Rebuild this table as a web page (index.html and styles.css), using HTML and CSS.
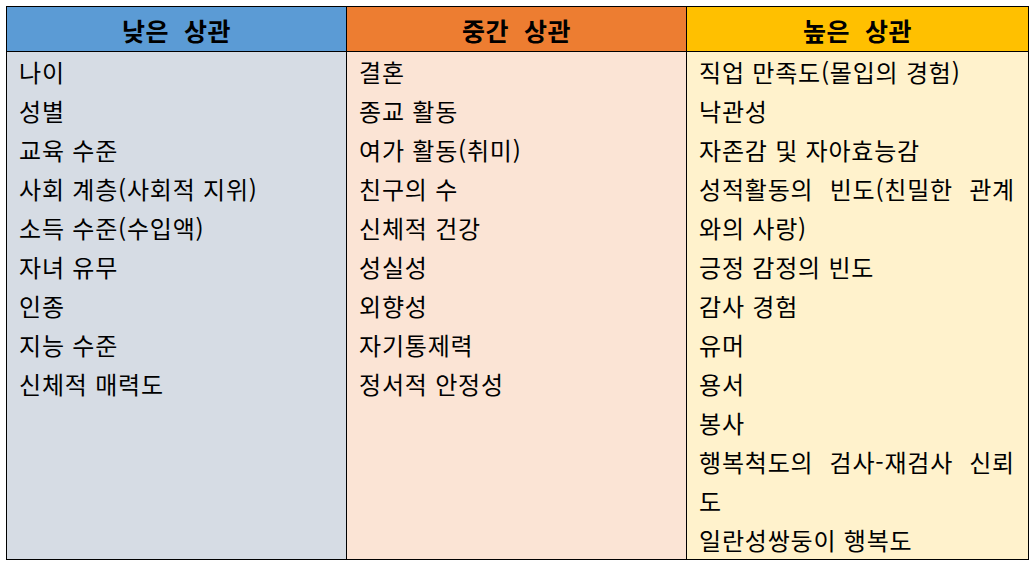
FILE: index.html
```html
<!DOCTYPE html>
<html lang="ko">
<head>
<meta charset="utf-8">
<link rel="stylesheet" href="styles.css">
</head>
<body>
<table class="corr">
  <colgroup>
    <col class="c1"><col class="c2"><col class="c3">
  </colgroup>
  <thead>
    <tr>
      <th class="h-low">낮은&nbsp; 상관</th>
      <th class="h-mid">중간&nbsp; 상관</th>
      <th class="h-high">높은&nbsp; 상관</th>
    </tr>
  </thead>
  <tbody>
    <tr>
      <td class="b-low">
        <p>나이</p>
        <p>성별</p>
        <p>교육 수준</p>
        <p>사회 계층(사회적 지위)</p>
        <p>소득 수준(수입액)</p>
        <p>자녀 유무</p>
        <p>인종</p>
        <p>지능 수준</p>
        <p>신체적 매력도</p>
      </td>
      <td class="b-mid">
        <p>결혼</p>
        <p>종교 활동</p>
        <p>여가 활동(취미)</p>
        <p>친구의 수</p>
        <p>신체적 건강</p>
        <p>성실성</p>
        <p>외향성</p>
        <p>자기통제력</p>
        <p>정서적 안정성</p>
      </td>
      <td class="b-high">
        <p>직업 만족도(몰입의 경험)</p>
        <p>낙관성</p>
        <p>자존감 및 자아효능감</p>
        <p>성적활동의 빈도(친밀한 관계와의 사랑)</p>
        <p>긍정 감정의 빈도</p>
        <p>감사 경험</p>
        <p>유머</p>
        <p>용서</p>
        <p>봉사</p>
        <p>행복척도의 검사-재검사 신뢰도</p>
        <p>일란성쌍둥이 행복도</p>
      </td>
    </tr>
  </tbody>
</table>
</body>
</html>
```

FILE: styles.css
```css
html, body {
  margin: 0;
  background: #ffffff;
}
body {
  padding: 6px 0 0 6px;
  font-family: "Noto Sans CJK KR", "Noto Sans", sans-serif;
  color: #000;
}
.corr {
  border-collapse: collapse;
  table-layout: fixed;
  width: 1022px;
}
.c1 { width: 340px; }
.c2 { width: 340px; }
.c3 { width: 342px; }
.corr th, .corr td {
  border: 1px solid #000;
}
.corr th {
  height: 42px;
  padding: 0;
  font-size: 25px;
  font-weight: 700;
  letter-spacing: 0.5px;
  text-align: center;
  vertical-align: middle;
  line-height: 1;
  padding-top: 2px;
}
.h-low { background: #5b9bd5; }
.h-mid { background: #ed7d31; }
.h-high { background: #ffc000; }
.corr td {
  vertical-align: top;
  padding: 0 13px 0 12px;
  font-size: 24px;
  letter-spacing: 0.8px;
}
.b-low { background: #d6dce4; }
.b-mid { background: #fbe4d5; }
.b-high { background: #fff2cc; }
.corr p {
  margin: 0;
  line-height: 39px;
  text-align: justify;
}
```
